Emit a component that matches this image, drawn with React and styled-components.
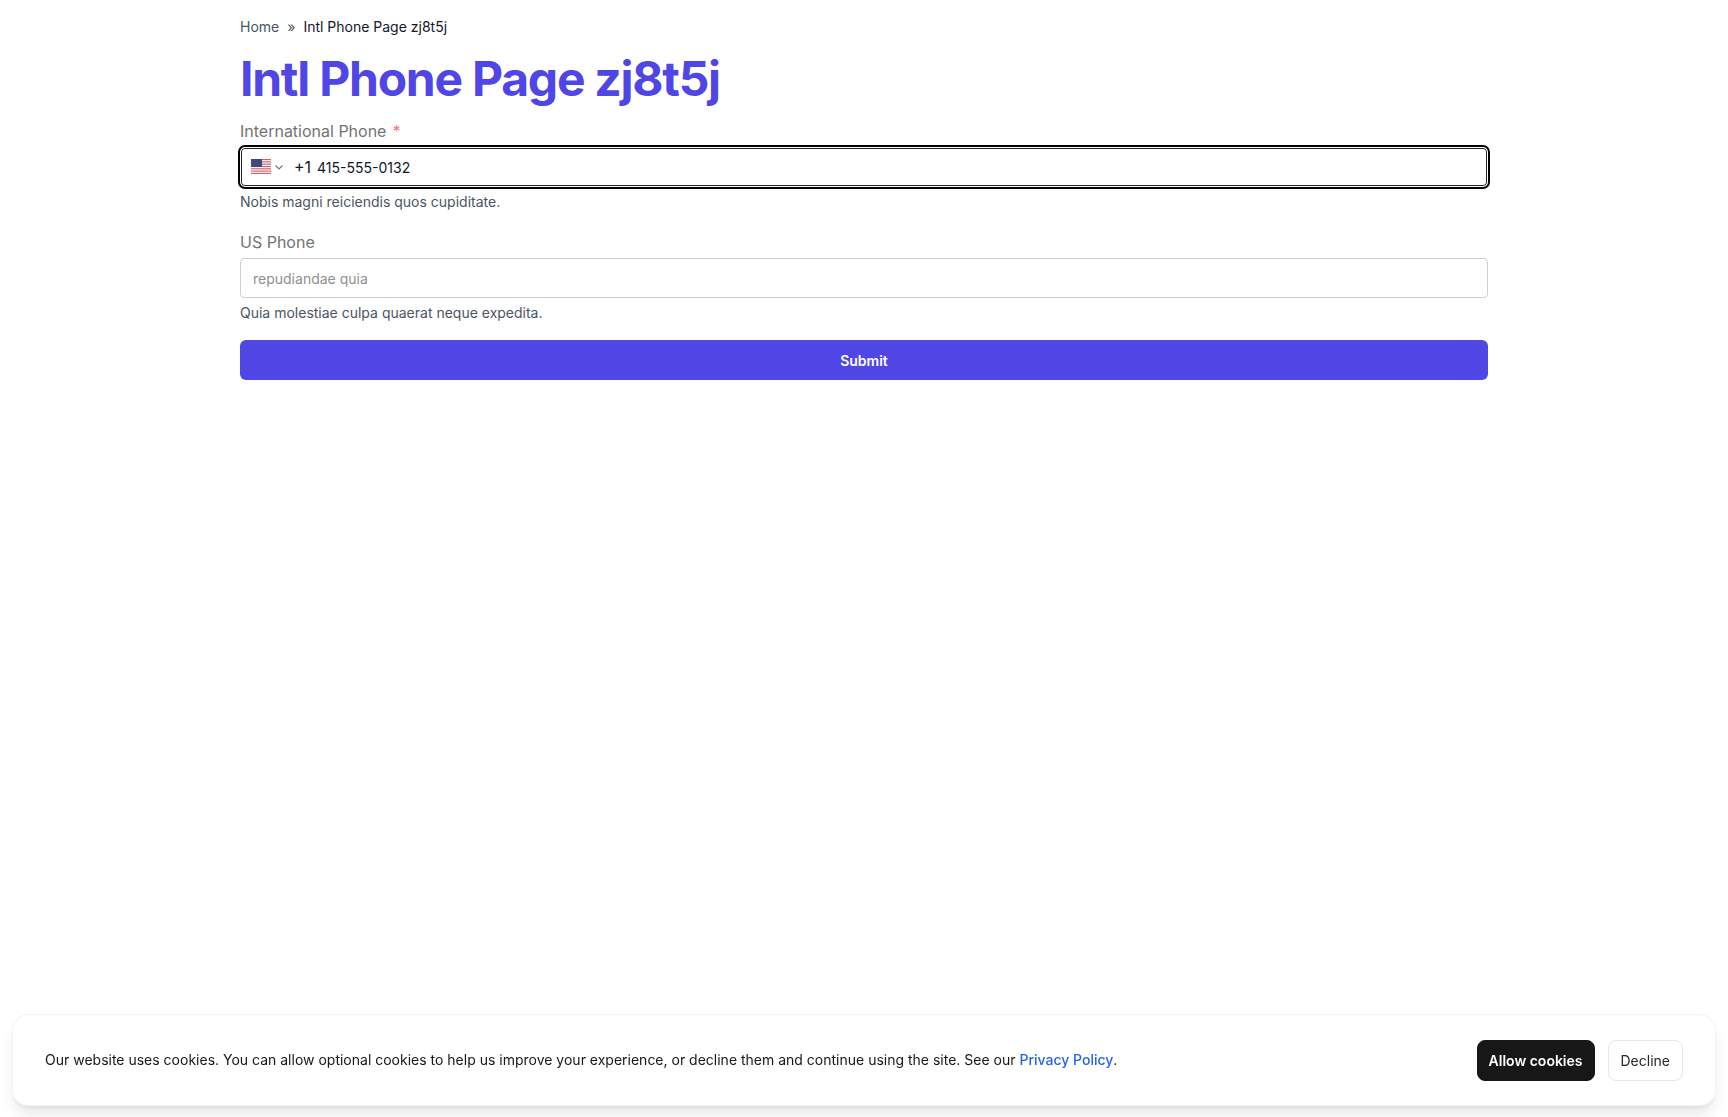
import React from "react";
import styled, { createGlobalStyle } from "styled-components";

const Global = createGlobalStyle`
  * { box-sizing: border-box; }
  html, body { margin: 0; padding: 0; background: #fff; }
  body { font-family: Inter, "Liberation Sans", sans-serif; color: #111827; }
`;

const Page = styled.main`
  max-width: 1280px;
  margin: 0 auto;
  padding: 16px;
`;

const Crumbs = styled.nav`
  display: flex;
  align-items: center;
  font-size: 14px;
  line-height: 20px;
  height: 22px;
  margin-bottom: 17px;
`;

const CrumbLink = styled.a`
  color: #4b5563;
  text-decoration: none;
`;

const CrumbSep = styled.span`
  color: #4b5563;
  margin: 0 8px;
`;

const CrumbCurrent = styled.span`
  color: #111827;
`;

const Title = styled.h1`
  margin: 0 0 16px;
  font-size: 48px;
  line-height: 48px;
  font-weight: 700;
  letter-spacing: -1.25px;
  color: #4f46e5;
`;

const Field = styled.div`
  margin-bottom: ${(p) => (p.$last ? 15 : 16)}px;
`;

const Label = styled.label`
  display: block;
  font-size: 16px;
  line-height: 24px;
  color: #737373;
  margin-bottom: 4px;
`;

const Required = styled.span`
  color: #f87171;
  margin-left: 6px;
`;

const PhoneBox = styled.div`
  display: flex;
  align-items: center;
  height: 40px;
  padding: 0 12px 0 10px;
  border: 1px solid #fff;
  border-radius: 5px;
  background: #fff;
  outline: 2px solid #000;
  outline-offset: 0;
  box-shadow: inset 0 0 0 1px #222;
`;

const CountryButton = styled.button`
  display: flex;
  align-items: center;
  gap: 2px;
  padding: 0;
  border: 0;
  background: none;
  color: #737373;
`;

const FlagIcon = styled.svg`
  display: block;
  margin-top: -2px;
`;

const Dial = styled.span`
  margin-left: 9px;
  font-size: 16px;
  line-height: 20px;
  color: #111827;
`;

const PhoneInput = styled.input`
  flex: 1;
  min-width: 0;
  margin-left: 6px;
  padding: 0;
  border: 0;
  outline: 0;
  background: none;
  font: 14px Inter, "Liberation Sans", sans-serif;
  color: #111827;
`;

const TextInput = styled.input`
  display: block;
  width: 100%;
  height: 40px;
  padding: 0 12px;
  border: 1px solid #cfcfcf;
  border-radius: 4px;
  outline: 0;
  font: 14px Inter, "Liberation Sans", sans-serif;
  color: #111827;
  &::placeholder { color: #8f8f8f; opacity: 1; }
`;

const Hint = styled.p`
  margin: 3px 0 0;
  font-size: 14px;
  line-height: 24px;
  color: #4b5563;
`;

const Submit = styled.button`
  display: block;
  width: 100%;
  height: 40px;
  border: 0;
  border-radius: 6px;
  background: #4f46e5;
  color: #fff;
  font: 600 14px Inter, "Liberation Sans", sans-serif;
`;

const CookieBar = styled.aside`
  position: fixed;
  left: 12px;
  right: 12px;
  bottom: 11px;
  height: 92px;
  display: flex;
  align-items: center;
  justify-content: space-between;
  padding: 0 32px;
  background: #fff;
  border: 1px solid #f3f4f6;
  border-radius: 16px;
  box-shadow: 0 10px 15px -3px rgba(0, 0, 0, 0.1), 0 4px 6px -4px rgba(0, 0, 0, 0.1);
`;

const CookieText = styled.p`
  margin: 0;
  font-size: 14px;
  line-height: 20px;
  color: #171717;
`;

const PolicyLink = styled.a`
  color: #2563eb;
  font-weight: 500;
  text-decoration: none;
`;

const CookieActions = styled.div`
  display: flex;
  gap: 13px;
`;

const CookieButton = styled.button`
  height: 41px;
  padding: 0 ${(p) => (p.$primary ? 11 : 12)}px;
  border-radius: 8px;
  font: ${(p) => (p.$primary ? 600 : 400)} 14px Inter, "Liberation Sans", sans-serif;
  color: ${(p) => (p.$primary ? "#fff" : "#262626")};
  background: ${(p) => (p.$primary ? "#171717" : "#fff")};
  border: 1px solid ${(p) => (p.$primary ? "#171717" : "#e5e7eb")};
`;

const stripes = [0, 2, 4, 6, 8, 10, 12];

function UsFlag() {
  return (
    <FlagIcon width="20" height="15" viewBox="0 0 20 15" aria-hidden="true">
      <rect width="20" height="15" fill="#fff" />
      {stripes.map((y) => (
        <rect key={y} y={y * 1.154} width="20" height="1.154" fill="#d0606e" />
      ))}
      <rect width="11" height="8" fill="#3f4a7a" />
    </FlagIcon>
  );
}

function Chevron() {
  return (
    <svg width="12" height="12" viewBox="0 0 12 12" fill="none" stroke="currentColor" strokeWidth="1.1" aria-hidden="true">
      <path d="M2.5 4.5 6 8 9.5 4.5" />
    </svg>
  );
}

export default function App() {
  return (
    <>
      <Global />
      <Page>
        <Crumbs>
          <CrumbLink href="#">Home</CrumbLink>
          <CrumbSep>»</CrumbSep>
          <CrumbCurrent>Intl Phone Page zj8t5j</CrumbCurrent>
        </Crumbs>
        <Title>Intl Phone Page zj8t5j</Title>
        <Field>
          <Label>
            International Phone<Required>*</Required>
          </Label>
          <PhoneBox>
            <CountryButton type="button">
              <UsFlag />
              <Chevron />
            </CountryButton>
            <Dial>+1</Dial>
            <PhoneInput defaultValue="415-555-0132" />
          </PhoneBox>
          <Hint>Nobis magni reiciendis quos cupiditate.</Hint>
        </Field>
        <Field $last>
          <Label>US Phone</Label>
          <TextInput placeholder="repudiandae quia" />
          <Hint>Quia molestiae culpa quaerat neque expedita.</Hint>
        </Field>
        <Submit type="button">Submit</Submit>
      </Page>
      <CookieBar>
        <CookieText>
          Our website uses cookies. You can allow optional cookies to help us improve your experience, or decline them and continue using the site. See our <PolicyLink href="#">Privacy Policy</PolicyLink>.
        </CookieText>
        <CookieActions>
          <CookieButton $primary type="button">Allow cookies</CookieButton>
          <CookieButton type="button">Decline</CookieButton>
        </CookieActions>
      </CookieBar>
    </>
  );
}
